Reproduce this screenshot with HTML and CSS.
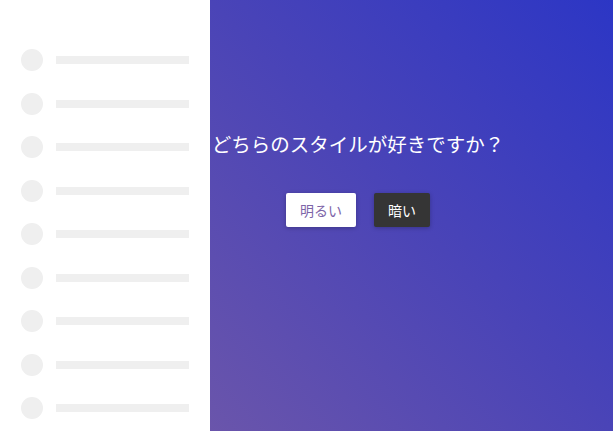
FILE: index.html
```html
<!DOCTYPE html>
<html lang="ja">
<head>
<meta charset="utf-8">
<link rel="stylesheet" href="styles.css">
</head>
<body>
<div class="page">
  <aside class="sidebar">
    <div class="row"><span class="dot"></span><span class="bar"></span></div>
    <div class="row"><span class="dot"></span><span class="bar"></span></div>
    <div class="row"><span class="dot"></span><span class="bar"></span></div>
    <div class="row"><span class="dot"></span><span class="bar"></span></div>
    <div class="row"><span class="dot"></span><span class="bar"></span></div>
    <div class="row"><span class="dot"></span><span class="bar"></span></div>
    <div class="row"><span class="dot"></span><span class="bar"></span></div>
    <div class="row"><span class="dot"></span><span class="bar"></span></div>
    <div class="row"><span class="dot"></span><span class="bar"></span></div>
  </aside>
  <main class="main">
    <div class="content">
      <h1 class="question">どちらのスタイルが好きですか？</h1>
      <div class="buttons">
        <button class="btn btn-light">明るい</button>
        <button class="btn btn-dark">暗い</button>
      </div>
    </div>
  </main>
</div>
</body>
</html>
```
FILE: styles.css
```css
html, body {
  margin: 0;
  padding: 0;
  height: 100%;
}
body {
  font-family: "Noto Sans CJK JP", "Noto Sans", sans-serif;
  overflow: hidden;
}
.page {
  display: flex;
  height: 431px;
  width: 613px;
}
.sidebar {
  width: 210px;
  flex: none;
  background: #ffffff;
  box-sizing: border-box;
  padding: 49px 0 0 21px;
  display: flex;
  flex-direction: column;
  gap: 21.5px;
}
.row {
  display: flex;
  align-items: center;
  gap: 13px;
  height: 22px;
}
.dot {
  width: 22px;
  height: 22px;
  border-radius: 50%;
  background: #efefef;
  flex: none;
}
.bar {
  width: 133px;
  height: 8px;
  background: #efefef;
}
.main {
  flex: 1;
  background: linear-gradient(to top right, #6a55ab 0%, #4a44b7 50%, #2c36c5 100%);
  display: flex;
  justify-content: flex-start;
  align-items: flex-start;
}
.content {
  width: 296px;
  padding-top: 128px;
  display: flex;
  flex-direction: column;
  align-items: center;
}
.question {
  margin: 0;
  color: #ffffff;
  font-weight: 400;
  font-size: 19.5px;
  line-height: 32px;
  white-space: nowrap;
}
.buttons {
  display: flex;
  gap: 18px;
  margin-top: 33px;
}
.btn {
  font-family: "Noto Sans CJK JP", "Noto Sans", sans-serif;
  font-size: 14px;
  height: 34px;
  padding: 0 14px;
  border: none;
  border-radius: 2px;
  box-shadow: 0 1px 4px rgba(0,0,0,0.25);
}
.btn-light {
  background: #ffffff;
  color: #7d65a8;
}
.btn-dark {
  background: #353535;
  color: #ffffff;
}
```
